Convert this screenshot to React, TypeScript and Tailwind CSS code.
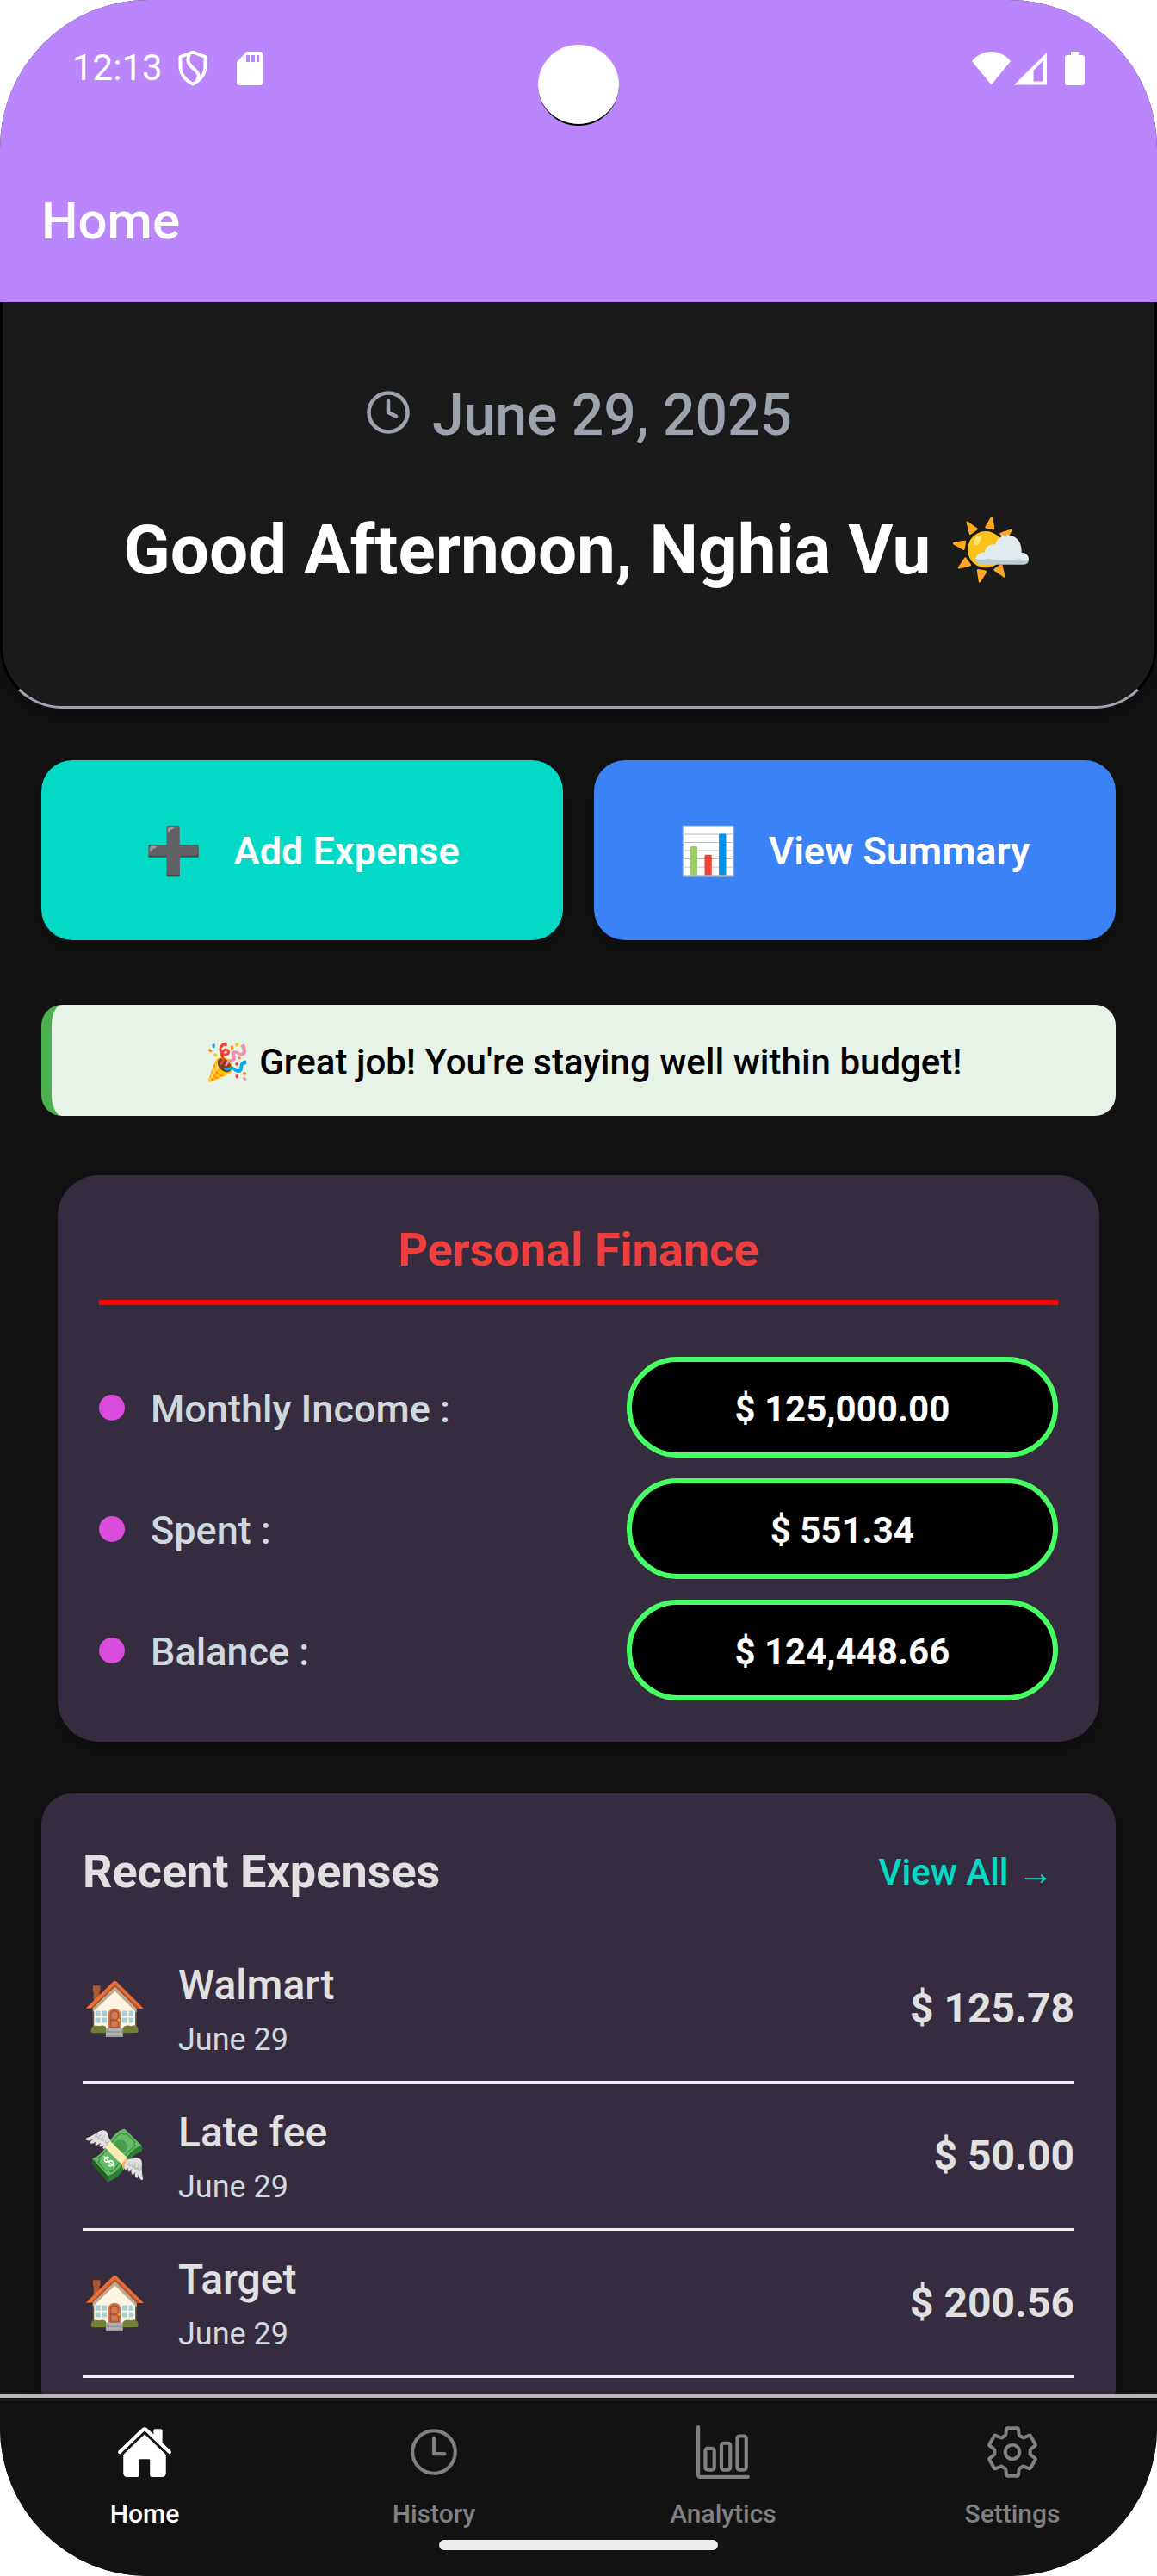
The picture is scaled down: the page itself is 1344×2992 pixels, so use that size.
import type { ReactNode } from "react";
import { Clock } from "lucide-react";
import { IoBarChartOutline, IoHome, IoSettingsOutline, IoTimeOutline } from "react-icons/io5";

const finance = [
  { label: "Monthly Income :", value: "$ 125,000.00" },
  { label: "Spent :", value: "$ 551.34" },
  { label: "Balance :", value: "$ 124,448.66" },
];

const expenses = [
  { icon: "🏠", name: "Walmart", date: "June 29", amount: "$ 125.78" },
  { icon: "💸", name: "Late fee", date: "June 29", amount: "$ 50.00" },
  { icon: "🏠", name: "Target", date: "June 29", amount: "$ 200.56" },
];

function StatusBar() {
  return (
    <div className="relative flex h-[158px] items-center justify-between px-[84px]">
      <div className="flex items-center">
        <span className="text-[42px] leading-[48px]">12:13</span>
        <svg className="ml-[18px] h-[42px] w-[34px]" viewBox="0 0 34 42" fill="none" stroke="currentColor" strokeWidth="4" strokeLinejoin="round">
          <path d="M17 2.500 31.500 8v11c0 9-6 16.500-14.500 20.500C8.500 35.500 2.500 28 2.500 19V8z" />
          <path d="M13 5c-3 7-2 10 3 15 6 5.500 10 8 6 16" />
        </svg>
        <svg className="ml-[34px] h-[39px] w-[30px]" viewBox="0 0 30 39" aria-hidden="true">
          <path fill="currentColor" fillRule="evenodd" d="M11.500 0H27a3 3 0 0 1 3 3v33a3 3 0 0 1-3 3H3a3 3 0 0 1-3-3V12zM11 4v8h4V4zm6 0v8h4V4zm6 0v8h3V4z" />
        </svg>
      </div>
      <div className="absolute top-[52px] left-1/2 size-[94px] -translate-x-1/2 rounded-full border-b-2 border-black bg-white" />
      <div className="flex items-center">
        <svg className="h-[39px] w-[45px]" viewBox="0 0 45 39" fill="currentColor" aria-hidden="true">
          <path d="M22.500 38.500 0 11C6 4 13.500 0 22.500 0S39 4 45 11z" />
        </svg>
        <svg className="ml-[4px] h-[39px] w-[38px]" viewBox="0 0 38 39" fill="currentColor" aria-hidden="true">
          <path fillRule="evenodd" d="M38 1v37.500H0zM34 10 22.500 22v12.500H34z" />
        </svg>
        <svg className="ml-[21px] h-[39px] w-[23px]" viewBox="0 0 23 39" fill="currentColor" aria-hidden="true">
          <path d="M7 0h9v4h4a3 3 0 0 1 3 3v29a3 3 0 0 1-3 3H3a3 3 0 0 1-3-3V7a3 3 0 0 1 3-3h4z" />
        </svg>
      </div>
    </div>
  );
}

function ActionButton({ icon, label, color }: { icon: string; label: string; color: string }) {
  return (
    <button type="button" className={`flex h-[209px] flex-1 items-center justify-center gap-9 rounded-[36px] pt-[3px] shadow-[0_8px_16px_rgba(0,0,0,0.3)] ${color}`}>
      <span className="text-[54px] leading-[72px]">{icon}</span>
      <span className="text-[45px] leading-[60px] font-semibold">{label}</span>
    </button>
  );
}

function NavItem({ icon, label, active = false }: { icon: ReactNode; label: string; active?: boolean }) {
  return (
    <a href="#" aria-current={active ? "page" : undefined} className={`flex flex-1 flex-col items-center gap-[21px] ${active ? "text-white" : "text-[#808080]"}`}>
      {icon}
      <span className="text-[30px] leading-[36px] font-medium">{label}</span>
    </a>
  );
}

export default function App() {
  return (
    <div className="h-screen bg-white">
      <div className="flex h-full flex-col overflow-hidden rounded-[172px] bg-[#121212] font-[Roboto,'Noto_Color_Emoji',sans-serif] text-white">
        <header className="bg-[#bb86fc]">
          <StatusBar />
          <h1 className="px-12 pt-[63px] pb-[58px] text-[60px] leading-[72px] font-medium">Home</h1>
        </header>

        <main className="min-h-0 flex-1 overflow-y-auto [scrollbar-width:none]">
          <section className="flex h-[472px] flex-col items-center gap-[66px] rounded-b-[72px] border-x-[3px] border-b-[3px] border-x-black border-b-[#9ca3af] bg-[#1a1a1a] pt-[90px] shadow-[0_8px_16px_rgba(0,0,0,0.3)]">
            <p className="flex items-center gap-6 text-[66px] leading-[84px] font-medium text-[#9ca3af]">
              <Clock size={54} className="mb-2" />
              June 29, 2025
            </p>
            <h2 className="text-[80px] leading-[96px] font-bold">Good Afternoon, Nghia Vu 🌤️</h2>
          </section>

          <div className="mt-[60px] flex gap-9 px-12">
            <ActionButton icon="➕" label="Add Expense" color="bg-[#03dac6]" />
            <ActionButton icon="📊" label="View Summary" color="bg-[#3b82f6]" />
          </div>

          <p className="mx-12 mt-[75px] rounded-[24px] border-l-[12px] border-[#4caf50] bg-[#e8f3e8] pt-[38px] pb-[34px] text-center text-[42px] leading-[57px] font-medium text-black">
            🎉 Great job! You're staying well within budget!
          </p>

          <section className="mx-[67px] mt-[69px] rounded-[48px] bg-[#362c3f] p-12 shadow-[0_8px_16px_rgba(0,0,0,0.3)]">
            <h2 className="border-b-[6px] border-[#ff0000] pt-1 pb-[23px] text-center text-[54px] leading-[70px] font-bold text-[#f03e3e]">Personal Finance</h2>
            <dl className="mt-[60px] flex flex-col gap-6">
              {finance.map((row) => (
                <div key={row.label} className="flex items-center gap-[30px]">
                  <span className="size-[30px] rounded-full bg-[#da4cdc]" />
                  <dt className="flex-1 pt-1 text-[45px] leading-[60px] font-medium text-[#cfd8dc]">{row.label}</dt>
                  <dd className="w-[45%] rounded-full border-[6px] border-[#47ff63] bg-black pt-[26px] pb-[22px] text-center text-[42px] leading-[57px] font-bold">{row.value}</dd>
                </div>
              ))}
            </dl>
          </section>

          <section className="mx-12 mt-[60px] mb-12 rounded-[36px] bg-[#362c3f] p-12 shadow-[0_8px_16px_rgba(0,0,0,0.3)]">
            <div className="flex items-center justify-between pr-6">
              <h2 className="text-[54px] leading-[86px] font-bold text-[#e0e0e0]">Recent Expenses</h2>
              <a href="#" className="text-[42px] leading-[57px] font-medium text-[#03dac6]">View All →</a>
            </div>
            <ul className="mt-8">
              {expenses.map((item) => (
                <li key={item.name} className="flex items-center border-b-[3px] border-[#f0f0f0] py-6">
                  <span className="w-[111px] text-[60px] leading-[72px]">{item.icon}</span>
                  <div className="flex-1">
                    <p className="text-[48px] leading-[66px] font-medium text-[#e0e0e0]">{item.name}</p>
                    <p className="mt-1.5 text-[36px] leading-[48px] text-[#cfd8dc]">{item.date}</p>
                  </div>
                  <span className="text-[48px] leading-[66px] font-bold text-[#e0e0e0]">{item.amount}</span>
                </li>
              ))}
            </ul>
          </section>
        </main>

        <nav className="border-t-[4px] border-[#b8b8b8] bg-[#121212] pt-[30px]">
          <div className="flex">
            <NavItem active icon={<IoHome size={66} />} label="Home" />
            <NavItem icon={<IoTimeOutline size={66} />} label="History" />
            <NavItem icon={<IoBarChartOutline size={66} />} label="Analytics" />
            <NavItem icon={<IoSettingsOutline size={66} />} label="Settings" />
          </div>
          <div className="mx-auto mt-3 mb-[30px] h-3 w-[324px] rounded-full bg-[#ececec]" />
        </nav>
      </div>
    </div>
  );
}
